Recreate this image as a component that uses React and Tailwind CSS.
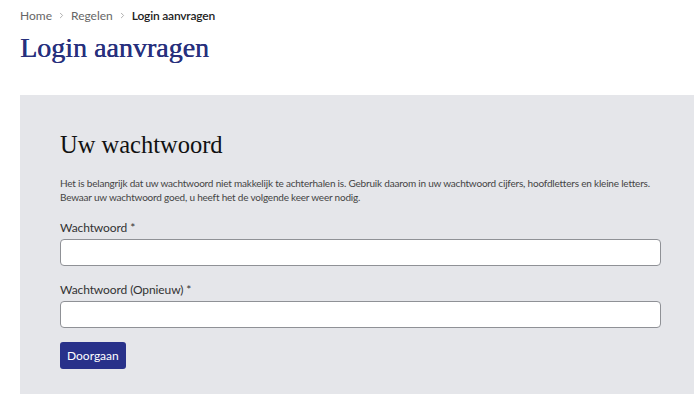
import React from 'react';
import { ChevronRight } from 'lucide-react';

const Field = ({ label, className }) => (
  <div className={className}>
    <label className="block text-[12px] leading-[16px] tracking-[-0.1px] text-[#333]">{label}</label>
    <input
      type="password"
      className="mt-[3px] block w-full h-[27px] rounded-[4px] border border-[#8f9196] bg-white"
    />
  </div>
);

export default function App() {
  return (
    <div className="h-[394px] overflow-hidden bg-white font-['Lato',sans-serif]">
      <nav className="flex items-center pl-[20px] pt-[8px] text-[12px] leading-[15px] text-[#666]">
        <span>Home</span>
        <ChevronRight size={9} className="mx-[5px] text-[#aaa]" strokeWidth={2.5} />
        <span>Regelen</span>
        <ChevronRight size={9} className="mx-[5px] text-[#aaa]" strokeWidth={2.5} />
        <span className="font-semibold text-[#222] tracking-[-0.2px]">Login aanvragen</span>
      </nav>
      <h1 className="pl-[20px] mt-[9px] font-['Liberation_Serif',serif] text-[28px] leading-[32px] text-[#27307d] [text-shadow:0.4px_0_0_#27307d]">
        Login aanvragen
      </h1>
      <section className="ml-[20px] mr-[1px] mt-[31px] bg-[#e5e6ea] pl-[40px] pr-[33px] pt-[35px] pb-[40px]">
        <h2 className="font-['Liberation_Serif',serif] text-[24.5px] leading-[30px] text-[#111]">Uw wachtwoord</h2>
        <p className="mt-[16px] whitespace-nowrap text-[10px] leading-[14px] tracking-[-0.2px] text-[#444]">
          Het is belangrijk dat uw wachtwoord niet makkelijk te achterhalen is. Gebruik daarom in uw wachtwoord cijfers, hoofdletters en kleine letters.
          <br />
          Bewaar uw wachtwoord goed, u heeft het de volgende keer weer nodig.
        </p>
        <Field label="Wachtwoord *" className="mt-[16px]" />
        <Field label="Wachtwoord (Opnieuw) *" className="mt-[16px]" />
        <button className="mt-[14px] h-[27px] px-[7px] rounded-[3px] bg-[#28318a] text-white text-[12px]">
          Doorgaan
        </button>
      </section>
    </div>
  );
}
